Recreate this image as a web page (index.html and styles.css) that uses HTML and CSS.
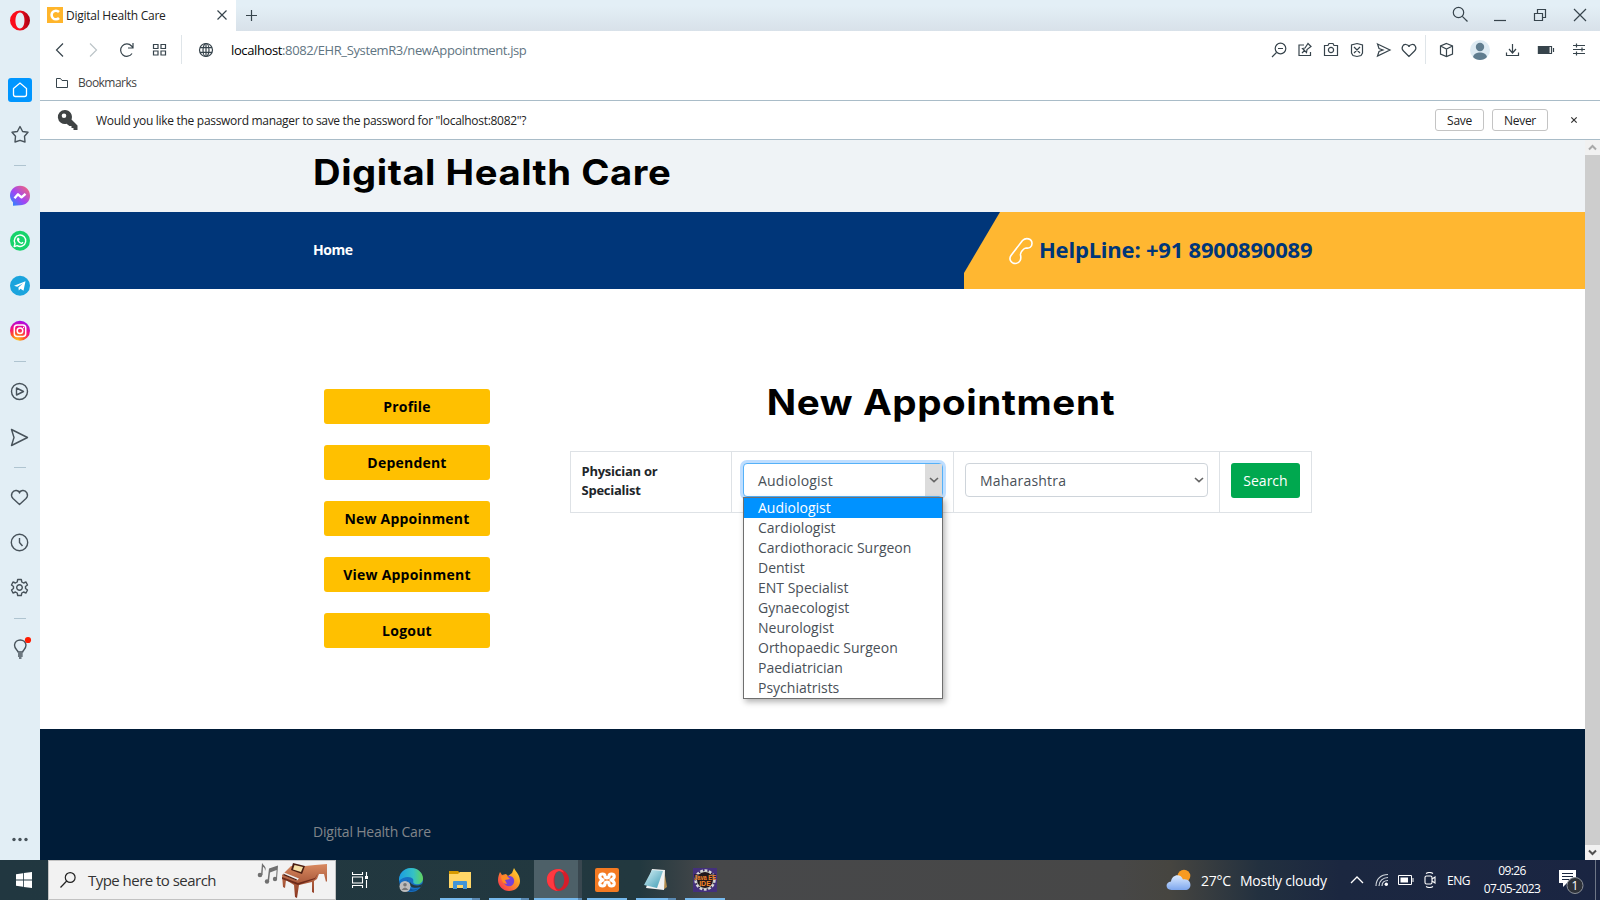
FILE: index.html
```html
<!DOCTYPE html>
<html lang="en">
<head>
<meta charset="utf-8">
<title>Digital Health Care</title>
<link rel="stylesheet" href="styles.css">
</head>
<body>
<div class="screen">
<div class="browser">
  <aside class="sidebar">
    <svg class="opera" viewBox="-13 -12.5 25 25"><defs><linearGradient id="op" x1="0" y1="0" x2="1" y2="0"><stop offset=".45" stop-color="#fb0d1b"/><stop offset="1" stop-color="#a70014"/></linearGradient></defs><path fill="url(#op)" fill-rule="evenodd" d="M0-10A10 10 0 1 1 0 10A10 10 0 1 1 0-10ZM0-8C-6-8-6 8 0 8C6 8 6-8 0-8Z"/></svg>
    <div class="home"><svg viewBox="-12 -12 24 24"><path d="M-6.5-1.5L0-7L6.5-1.5V4.500Q6.500 6.500 4.500 6.500H-4.500Q-6.500 6.500-6.500 4.500Z"/></svg></div>
    <svg class="ico star" viewBox="-13 -12.500 25 25"><path d="M0-8L2.600-3L8-2.200L4.500 1.800L5 7.500L0 5.800L-5 7.500L-4.500 1.800L-8-2.200L-2.600-3Z"/></svg>
    <i class="rule"></i>
    <svg class="ico m18" viewBox="-13 -12.800 25 25"><defs><linearGradient id="ms" x1="0" y1="1" x2="1" y2="0"><stop offset="0" stop-color="#1594ff"/><stop offset=".45" stop-color="#a044f5"/><stop offset="1" stop-color="#ff6b68"/></linearGradient></defs><path class="fill" fill="url(#ms)" d="M0-10C6-10 10-5.500 10 0S6 9.500 0 9.500L-7 10V6.500C-9 4.500-10 2-10 0C-10-5.500-6-10 0-10Z"/><path stroke="#fff" stroke-width="2.400" d="M-5.500 2.500L-2-1.500L1.500 1.500L5.500-2"/></svg>
    <svg class="ico m20" viewBox="-13 -12.800 25 25"><circle class="fill" r="10" fill="#16d46b"/><path stroke="#fff" d="M-5.800 5.800L-5 2.600A5.700 5.700 0 1 1-2.800 4.900Z"/><path class="fill" fill="#fff" d="M-2.500-3L-1-3L-.4-1.200L-1 0Q0 1.600 1.400 2L2.300 1L3.500 1.800Q3 3.500 1.400 3.200Q-2.500 2-3.200-1.200Z"/></svg>
    <svg class="ico m20" viewBox="-13 -12.800 25 25"><circle class="fill" r="10" fill="#1ba4dd"/><path class="fill" fill="#fff" d="M-6 0L5.500-4.500L3.500 5L.5 3L-1.200 4.700L-1.600 1.600L3-2.500L-2.800 1Z"/></svg>
    <svg class="ico m20" viewBox="-13 -12.800 25 25"><defs><radialGradient id="ig" cx=".35" cy="1" r="1"><stop offset="0" stop-color="#ffd21f"/><stop offset=".35" stop-color="#ff5a1e"/><stop offset=".65" stop-color="#f80f7b"/><stop offset="1" stop-color="#a90be8"/></radialGradient></defs><circle class="fill" r="10" fill="url(#ig)"/><g stroke="#fff" stroke-width="1.500"><rect x="-5.700" y="-5.700" width="11.400" height="11.400" rx="3"/><circle r="2.800"/><path d="M3-3.300H4"/></g></svg>
    <i class="rule"></i>
    <svg class="ico m17" viewBox="-12.500 -12.500 25 25"><circle r="8"/><path d="M-3-3.500L4 0L-3 3.500Z"/></svg>
    <svg class="ico m21" viewBox="-12.500 -12.500 25 25"><path d="M-8-8L8 0L-8 8L-5.500 0Z"/></svg>
    <i class="rule r17"></i>
    <svg class="ico m17" viewBox="-12.500 -12.500 25 25"><path d="M0 7L-6.500 1C-10-3-6.500-7.500-3-7C-1.200-6.700 0-5.500 0-4.500C0-5.500 1.200-6.700 3-7C6.500-7.500 10-3 6.500 1Z"/></svg>
    <svg class="ico m20" viewBox="-12.500 -12.500 25 25"><circle r="8.200"/><path d="M0-4.500V0L3 3.500"/></svg>
    <svg class="ico m20" viewBox="-12.500 -12.500 25 25"><circle r="2.800"/><path d="M-1.800-8H1.800L2.300-5.500L4-4.500L6.500-5.500L8-2.500L6-1V1L8 2.500L6.500 5.500L4 4.500L2.300 5.500L1.800 8H-1.800L-2.300 5.500L-4 4.500L-6.500 5.500L-8 2.500L-6 1V-1L-8-2.500L-6.500-5.500L-4-4.500L-2.300-5.500Z"/></svg>
    <i class="rule"></i>
    <svg class="ico m18" viewBox="-12.500 -12.500 25 25"><path d="M-1.500 3.500C-1.500 1.500-5 1-5-3.500A5.800 5.800 0 0 1 6.500-3.500C6.500 1 3.200 1.500 3.200 3.500ZM-1.500 5.500H3.200M-1.500 7.500H3.200M-.500 9.500H2"/><circle class="fill" cx="8.500" cy="-8.500" r="3.100" fill="#ff1b00"/></svg>
    <svg class="ico dots" viewBox="-13 -12.500 25 25"><g class="fill" fill="#47525a"><circle cx="-6" r="1.700"/><circle r="1.700"/><circle cx="6" r="1.700"/></g></svg>
  </aside>

  <div class="window">
    <div class="tabs">
      <div class="tab">
        <svg class="fav" viewBox="0 0 16 16"><rect width="16" height="16" fill="#ffb52b"/><path d="M12 5A4.300 4.300 0 1 0 12 11" fill="none" stroke="#fff" stroke-width="2.600"/></svg>
        <span class="tab-title">Digital Health Care</span>
        <svg class="ti x" viewBox="-12 -12 24 24"><path d="M-4.500-4.500L4.500 4.500M4.500-4.500L-4.500 4.500"/></svg>
      </div>
      <svg class="ti plus" viewBox="-12 -12 24 24"><path d="M-6 .5H5M-.5-5V6"/></svg>
      <svg class="ti wsearch" viewBox="-12 -12 24 24"><circle cx="-1.500" cy="-2.500" r="5.200"/><path d="M2.300 1.300L7.500 6.500"/></svg>
      <svg class="ti wc" viewBox="-12 -12 24 24"><path d="M-6 5.500H6"/></svg>
      <svg class="ti wc" viewBox="-12 -12 24 24"><path d="M-5.500-1.500H2.500V5.500H-5.500ZM-2.500-1.500V-5.500H5.500V2.500H2.500"/></svg>
      <svg class="ti wc" viewBox="-12 -12 24 24"><path d="M-6-6L6 6M6-6L-6 6"/></svg>
    </div>
    <div class="toolbar">
      <svg class="ti" viewBox="-12 -12 24 24"><path d="M3-6.500L-3.500 0L3 6.500"/></svg>
      <svg class="ti g9 faint" viewBox="-12 -12 24 24"><path d="M-3-6.500L3.500 0L-3 6.500"/></svg>
      <svg class="ti g10" viewBox="-12 -12 24 24"><path d="M5 3.500A6.200 6.200 0 1 1 4.500-4L6-2M6-7V-2H1"/></svg>
      <svg class="ti g9" viewBox="-12 -12 24 24"><path d="M-6.500-5.500H-2V-1.500H-6.500ZM1-5.500H5.500V-1.500H1ZM-6.500 1H-2V5H-6.500ZM1 1H5.500V5H1Z"/></svg>
      <i class="vr g9"></i>
      <svg class="ti g12" viewBox="-12 -12 24 24"><circle r="6.500"/><ellipse rx="3" ry="6.500"/><path d="M-6-2.300H6M-6 2.300H6M0-6.500V6.500"/></svg>
      <span class="url"><b>localhost</b>:8082/EHR_SystemR3/newAppointment.jsp</span>
      <svg class="ti push" viewBox="-12 -12 24 24"><circle cx="1.500" cy="-1.500" r="5.300"/><path d="M-1-1.500H4M-2.500 2.500L-7 7"/></svg>
      <svg class="ti g2" viewBox="-12 -12 24 24"><path d="M-1-5H-6V5.500H5.500V2M-3 3L0 0M-2.500-1.500L1.500 2.500L2-.5L6-3.500L3-6.500L0-2Z"/></svg>
      <svg class="ti g2" viewBox="-12 -12 24 24"><path d="M-6.500-4.500H-3L-2-6.500H2L3-4.500H6.500V5.500H-6.500Z"/><circle r="2.600"/></svg>
      <svg class="ti g2" viewBox="-12 -12 24 24"><path d="M0-6.500L5.500-5V3L4 5.500L0 6.500L-4 5.500L-5.500 3V-5ZM-3-3L3 3M3-3L-3 3"/></svg>
      <svg class="ti g2" viewBox="-12 -12 24 24"><path d="M-5.500-6L7 0L-5.500 6L-4 1.500L0 0L-4-1.500Z"/></svg>
      <svg class="ti g2" viewBox="-12 -12 24 24"><path d="M0 6.500L-5.500 1C-8.500-2-6-6-3-5.500C-1.200-5.200 0-4.200 0-3C0-4.200 1.200-5.200 3-5.500C6-6 8.500-2 5.500 1Z"/></svg>
      <i class="vr g4"></i>
      <svg class="ti g8" viewBox="-12 -12 24 24"><path d="M.5-6.500L6.500-4V4L.5 6.500L-5.500 4V-4ZM-5.500-4L.5-1L6.500-4M.5-1V6.500"/></svg>
      <svg class="ti g10" viewBox="-12 -12 24 24"><g stroke="none"><circle r="10" fill="#deebf3"/><circle cy="-3" r="4.200" fill="#607d8f"/><path fill="#607d8f" d="M-7 7C-6 3.500-3 2.500 0 2.500S6 3.500 7 7C4 11-4 11-7 7Z"/></g></svg>
      <svg class="ti g9" viewBox="-12 -12 24 24"><path d="M-.5-6V3M-4-1L-.5 3L3-1M-6.500 2.500V5.500H5.500V2.500"/></svg>
      <svg class="ti g9" viewBox="-12 -12 24 24"><path d="M-7.500-3.500H5.500V3.500H-7.500ZM7.500-2V2"/><path class="solid" d="M-7.500-3.500H3V3.500H-7.500Z"/></svg>
      <svg class="ti g9" viewBox="-12 -12 24 24"><path d="M-6-4.500H6M-6-.500H6M-6 3.500H6M-2.500-6.500V-2.500M3-2.500V1.500M-2.500 1.500V5.500"/></svg>
    </div>
    <div class="bookmarks">
      <svg class="folder" viewBox="0 0 14 12"><path d="M1.500 1.500H5.500L7 3.500H12.500V10.500H1.500Z"/></svg>
      <span class="bm">Bookmarks</span>
    </div>
    <div class="pwbar">
      <svg class="key" viewBox="0 0 22 22"><path fill="#3f4344" fill-rule="evenodd" d="M8 1A7 7 0 0 1 14.500 10.500L20.500 16.500V21H16.500V19H14.500V17H12.500L9.500 14.800A7 7 0 1 1 8 1ZM7 4.500A2.300 2.300 0 1 0 7 9.100A2.300 2.300 0 1 0 7 4.500Z"/></svg>
      <span class="pwtext">Would you like the password manager to save the password for "localhost:8082"?</span>
      <button class="pwbtn save">Save</button>
      <button class="pwbtn never">Never</button>
      <svg class="pwx" viewBox="-4 -4 8 8"><path d="M-2.700-2.700L2.700 2.700M2.700-2.700L-2.700 2.700"/></svg>
    </div>

    <div class="view">
      <div class="page">
        <header class="brand"><h1>Digital Health Care</h1></header>
        <nav class="nav">
          <a class="navhome">Home</a>
          <div class="help">
            <svg class="phone" viewBox="0 0 26 28"><path d="M14.500 3.500C18 .200 24 1.500 24 6.500C24 10.500 21 11.500 18 11C16 11 12 15.500 12.500 18C13.500 22 12 26.500 7.500 26.500C3 26.500 .500 22 3 18.500Z"/></svg>
            <span class="helpline">HelpLine: +91 8900890089</span>
          </div>
        </nav>
        <main class="main">
          <div class="menu">
            <a>Profile</a><a>Dependent</a><a>New Appoinment</a><a>View Appoinment</a><a>Logout</a>
          </div>
          <section class="content">
            <h2>New Appointment</h2>
            <div class="row">
              <div class="cell label">Physician or<br>Specialist</div>
              <div class="cell">
                <div class="select open"><span>Audiologist</span><i class="arrow"><svg viewBox="0 0 10 6"><path d="M1 1L5 4.700L9 1"/></svg></i>
                  <ul class="list">
                    <li class="on">Audiologist</li><li>Cardiologist</li><li>Cardiothoracic Surgeon</li><li>Dentist</li><li>ENT Specialist</li><li>Gynaecologist</li><li>Neurologist</li><li>Orthopaedic Surgeon</li><li>Paediatrician</li><li>Psychiatrists</li>
                  </ul>
                </div>
              </div>
              <div class="cell state"><div class="select"><span>Maharashtra</span><i class="arrow"><svg viewBox="0 0 10 6"><path d="M1 1L5 4.700L9 1"/></svg></i></div></div>
              <div class="cell"><button class="search">Search</button></div>
            </div>
          </section>
        </main>
        <footer class="foot">Digital Health Care</footer>
      </div>
      <div class="scroll">
        <svg viewBox="0 0 15 15"><path stroke="#a9a9a9" d="M4 9.500L7.500 6L11 9.500"/></svg>
        <div class="thumb"></div>
        <svg viewBox="0 0 15 15"><path stroke="#505050" d="M4 5.500L7.500 9L11 5.500"/></svg>
      </div>
    </div>
  </div>
</div>

<div class="taskbar">
  <svg class="t16 win" viewBox="0 0 16 16"><path fill="#fff" d="M0 2.300L7 1.200V7.600H0ZM7.800 1L16 0V7.600H7.800ZM0 8.400H7V14.800L0 13.700ZM7.800 8.400H16V16L7.800 14.900Z"/></svg>
  <div class="tsearch">
    <svg class="t16" viewBox="0 0 16 16"><g fill="none" stroke="#222" stroke-width="1.200"><circle cx="10.200" cy="5.500" r="4.900"/><path d="M6.700 9L.5 15.500"/></g></svg>
    <span class="tstext">Type here to search</span>
    <svg class="piano" viewBox="0 0 72 38"><defs><linearGradient id="pn" x1="0" y1="0" x2="0" y2="1"><stop offset="0" stop-color="#d98a60"/><stop offset="1" stop-color="#87351f"/></linearGradient></defs>
      <g fill="#707070"><circle cx="3" cy="14" r="2.300"/><path d="M4 14L5 2C7 5 10 6 8 10C8 7 7 6 6 6L5.500 14Z"/><circle cx="10" cy="20.500" r="2.200"/><circle cx="18" cy="18" r="2.200"/><path d="M10.500 20L12 7.500L21 4.500L20 18H19L19.600 9L13 11.500L12 20.500Z"/></g>
      <path fill="url(#pn)" d="M25 14L34 5L48 5L58 4L70 3V20L69 21L67 13L62 13L60 18L57 20V32L55 31V21L42 24L40 37L38 36L37 24L29 19L28 27L26 26Z"/><path fill="#6e2b1b" d="M25 16L41 22L58 17L61 12L58 18L41 24L25 18Z"/><path fill="#eee" d="M27 11.500L42 17.500L40 19.500L26 13.500Z"/><path fill="#4a1d12" d="M27 13L40 18.500L39.500 19.500L26 14Z"/><path fill="#4a1d12" d="M36 2L48 5L45 13L34 9Z"/><path fill="#f5dfa5" d="M37.500 4L46 6L44 11L36 8.500Z"/></svg>
  </div>
  <svg class="t16 tview" viewBox="0 0 16 16"><g fill="none" stroke="#fff" stroke-width="1.100"><path d="M.5 0V2.500H10.500V0M.5 16V13.500H10.500V16M.5 5H10.500V11H.5ZM14.500 0V4M14.500 8V16"/></g><path fill="#fff" d="M13 4H16V7H13Z"/></svg>
  <div class="app a0"><svg viewBox="0 0 24 24"><defs><linearGradient id="ed"><stop offset="0" stop-color="#1b9de2"/><stop offset=".6" stop-color="#35c1c5"/><stop offset="1" stop-color="#62d45b"/></linearGradient></defs><circle cx="12" cy="12" r="12" fill="#1770c4"/><path fill="url(#ed)" d="M0 11C1 4 6 0 12 0C19 0 24 5 24 10.500C24 15 20 17 16 16C13 15 15 13 14 11C12 8 4 8 0 13Z"/><path fill="#223941" d="M24 15C20 19 13 18 11 14C9 19 15 21 22 19Z"/><path fill="#0e56a0" d="M9 12C7 19 13 24 20 20C15 25 5 24 5 16Z"/><circle cx="6" cy="18.500" r="5.500" fill="#bdbdbd"/><circle cx="6" cy="16.800" r="1.800" fill="#777"/><path fill="#777" d="M2.500 22Q6 17 9.500 22Z"/></svg></div>
  <div class="app a1"><svg viewBox="0 0 24 24"><path fill="#d69a00" d="M1 3H10L12 5V8H1Z"/><path fill="#ffd667" d="M1 6H10L12 4H23V20H1Z"/><path fill="#4195d8" d="M5 21V14Q5 13 6 13H18Q19 13 19 14V21H15V17H9V21Z"/></svg><i class="bar split"></i></div>
  <div class="app a2"><svg viewBox="0 0 24 24"><defs><linearGradient id="ff" x1="1" y1="0" x2="0" y2="1"><stop offset="0" stop-color="#ffe53b"/><stop offset=".4" stop-color="#ff9a24"/><stop offset="1" stop-color="#f5245a"/></linearGradient></defs><path fill="url(#ff)" d="M3 4L5 7L9 6L11 8L15 5L17 0C19 4 23 7 23 13C23 19 18 23 12 23S1 18 1 12C1 9 2 6 3 4Z"/><circle cx="12" cy="13" r="5.200" fill="#7541d8"/><path fill="#ff8a26" d="M4 8L10 8L13 11L8 12L10 16C6 16 4 12 4 8Z"/></svg><i class="bar split"></i></div>
  <div class="app a3 active"><svg viewBox="-12 -12 24 24"><path fill="#d61d29" fill-rule="evenodd" d="M0-11A11 11 0 1 1 0 11A11 11 0 1 1 0-11ZM1-9C-5-9-5 9 1 9C8 7 8-7 1-9Z"/><path fill="#ff3940" d="M1-11C-15-11-15 9 0 11C-6 8-6-8 1-9C3-9 5-8 6-7C5-10 3-11 1-11Z"/></svg><i class="bar split"></i></div>
  <div class="app a4"><svg viewBox="0 0 24 24"><rect width="24" height="24" rx="2" fill="#f47a22"/><path fill="none" stroke="#fff" stroke-width="3.200" stroke-linejoin="round" stroke-linecap="round" d="M8 12Q4.500 10.500 4.800 8Q5.200 6 7.500 6Q10 6 10 8.500Q10.200 9.800 12 9.800T14 8.500Q14 6 16.500 6Q18.800 6 19.200 8Q19.500 10.500 16 12Q19.500 13.500 19.200 16Q18.800 18 16.500 18Q14 18 14 15.500Q13.800 14.200 12 14.200T10 15.500Q10 18 7.500 18Q5.200 18 4.800 16Q4.500 13.500 8 12Z"/></svg><i class="bar"></i></div>
  <div class="app a5"><svg viewBox="0 0 24 24"><defs><linearGradient id="np" x1="0" y1="0" x2="1" y2="1"><stop offset="0" stop-color="#d7f1f6"/><stop offset="1" stop-color="#3d9bb4"/></linearGradient></defs><path fill="#b28b4c" d="M20 2L23 19L19 22Z"/><path fill="#f2f2f2" d="M8 1L21 2L20 22L2 20Z"/><path fill="url(#np)" d="M8 2L19 3L13 20L0 17Z"/></svg><i class="bar split"></i></div>
  <div class="app a6"><svg class="java" viewBox="0 0 24 24"><rect width="24" height="24" fill="#44307c"/><circle cx="12" cy="12" r="9.500" fill="#22171d" stroke="#d8d8d8" stroke-width="2.400" stroke-dasharray="2.800 1.600"/><circle cx="12" cy="12" r="8.500" fill="none" stroke="#ccc"/><path fill="#22171d" d="M1 6H23V12H1Z" opacity=".6"/><g fill="#f5852b" font-family="Liberation Sans" font-weight="700" text-anchor="middle"><text x="12" y="11.500" font-size="6.500" textLength="22" lengthAdjust="spacingAndGlyphs">Java EE</text><text x="12" y="17.500" font-size="7">IDE</text></g></svg><i class="bar"></i></div>
  <div class="tray">
    <svg class="cloud" viewBox="0 0 26 22"><defs><linearGradient id="cl" x1="0" y1="0" x2="0" y2="1"><stop offset="0" stop-color="#dcebff"/><stop offset="1" stop-color="#7ea7ee"/></linearGradient></defs><circle cx="18" cy="7" r="6.300" fill="#f79a22"/><path fill="url(#cl)" d="M5.500 21C-1 21-1 13 5 12.500C6 5 15 4 17 10.500C26 9 27 21 19 21Z"/></svg>
    <span class="temp">27°C</span><span class="sky">Mostly cloudy</span>
    <svg class="chev" viewBox="0 0 14 8"><path d="M1 7L7 1L13 7"/></svg>
    <svg class="wifi" viewBox="0 0 14 14"><g fill="none" stroke="#cfd5dc" stroke-width="1.200"><path d="M1 13C1 6 6 1.500 13 1.500M4 13C4 8 8 4.500 13 4.500M7 13C7 10 9 7.500 13 7.500"/></g><circle cx="11.300" cy="11.300" r="1.700" fill="#fff"/></svg>
    <svg class="batt" viewBox="0 0 16 10"><path d="M.5 .5H13.500V9.500H.5ZM15 3V7" fill="none" stroke="#fff"/><path fill="#fff" d="M2.500 2.500H10V7.500H2.500Z"/></svg>
    <svg class="meet" viewBox="0 0 12 16"><g fill="none" stroke="#fff" stroke-width="1.100"><rect x="1" y="4" width="7" height="8" rx="1.500"/><path d="M8 7L11 5V11L8 9M2 1.500Q5.500-.500 9 1.500M2 14.500Q5.500 16.500 9 14.500"/></g></svg>
    <span class="eng">ENG</span>
    <div class="clock"><span>09:26</span><span class="date">07-05-2023</span></div>
    <svg class="note" viewBox="0 0 25 25"><path fill="#fff" d="M0 1H17V14H8L4 18V14H0Z"/><path stroke="#1b2740" stroke-width="1.200" d="M3 4.500H14M3 7.500H14M3 10.500H10"/><circle cx="16" cy="16.500" r="8" fill="#2d3138" stroke="#8c9199"/><text x="16" y="21" fill="#fff" font-family="Open Sans" font-size="12" text-anchor="middle">1</text></svg>
    <i class="peek"></i>
  </div>
</div>
</div>
</body>
</html>
```

FILE: styles.css
```css
* { box-sizing: border-box; }
body { margin: 0; font-family: "Open Sans", "Noto Sans", sans-serif; overflow: hidden; }
svg { display: block; flex: none; }
i { display: block; flex: none; }
.screen { width: 1600px; height: 900px; display: flex; flex-direction: column; }
.browser { height: 860px; display: flex; }

/* left rail */
.sidebar { width: 40px; height: 860px; background: #e2eef5; padding: 8px 0 0 7px; flex: none; }
.opera { width: 25px; height: 25px; }
.home { width: 24px; height: 24px; margin: 45px 0 0 1px; border-radius: 3px; background: #0096ff; }
.home path { fill: none; stroke: #fff; stroke-width: 1.300; }
.ico { width: 25px; height: 25px; fill: none; stroke: #47525a; stroke-width: 1.400; stroke-linejoin: round; }
.ico .fill { stroke: none; }
.star { margin-top: 20px; }
.rule { width: 12px; height: 1px; margin: 18px 0 0 7px; background: #afc4d0; }
.r17, .m17 { margin-top: 17px; }
.m18 { margin-top: 17px; }
.m20 { margin-top: 20px; }
.m21 { margin-top: 21px; }
.dots { margin-top: 166px; }

/* browser chrome */
.window { width: 1560px; display: flex; flex-direction: column; }
.tabs { height: 31px; display: flex; align-items: flex-start; padding-right: 8px; background: linear-gradient(#e3eff6 20%, #d8e1e9); }
.tab { width: 196px; height: 31px; background: #fff; display: flex; padding: 7px 0 0 7px; }
.fav { width: 16px; height: 16px; }
.tab-title { width: 104px; margin-left: 3px; font-size: 12px; line-height: 18px; letter-spacing: -.250px; color: #222; white-space: nowrap; }
.ti { width: 24px; height: 24px; fill: none; stroke: #37444c; stroke-width: 1.200; }
.ti .solid { fill: #37444c; }
.x { margin: -4px 0 0 40px; }
.plus { margin: 3px 0 0 4px; }
.wsearch { margin: 3px 0 0 auto; }
.wc { margin: 3px 0 0 16px; }
.toolbar { height: 39px; display: flex; align-items: center; padding: 0 9px 2px 8px; background: #fff; }
.faint { stroke: #bcc4c8; }
.g2 { margin-left: 2px; } .g4 { margin-left: 4px; } .g8 { margin-left: 8px; } .g9 { margin-left: 9px; } .g10 { margin-left: 10px; } .g12 { margin-left: 12px; }
.vr { width: 1px; height: 29px; background: #dfe5e9; }
.url { margin-left: 13px; font-size: 13px; letter-spacing: -.380px; color: #5f7582; white-space: nowrap; }
.url b { font-weight: 400; color: #000; }
.push { margin-left: auto; }
.bookmarks { height: 31px; padding: 0 0 5px 15px; display: flex; align-items: center; border-bottom: 1px solid #a9bcc8; background: #fff; }
.folder { width: 14px; height: 12px; fill: none; stroke: #37444c; }
.bm { margin-left: 9px; font-size: 12px; letter-spacing: -.540px; color: #444; }
.pwbar { height: 39px; display: flex; align-items: center; border-bottom: 1px solid #a9bcc8; background: #fff; padding: 0 22px 0 17px; }
.key { width: 22px; height: 22px; }
.pwtext { margin-left: 17px; font-size: 12px; letter-spacing: -.300px; color: #222; white-space: nowrap; }
.pwbtn { height: 22px; padding: 0; border: 1px solid #c4c4c4; border-radius: 3px; background: #fff; color: #222; font: 12px "Open Sans", sans-serif; letter-spacing: -.300px; }
.save { width: 49px; margin-left: auto; }
.never { width: 56px; margin-left: 8px; }
.pwx { width: 8px; height: 8px; margin-left: 22px; stroke: #333; stroke-width: 1.200; }

/* web page */
.view { height: 720px; display: flex; }
.page { width: 1545px; background: #fff; }
.scroll { width: 15px; display: flex; flex-direction: column; background: #f1f1f1; }
.scroll svg { width: 15px; height: 15px; fill: none; stroke-width: 2; }
.thumb { flex: 1; background: #cdcdcd; }
.brand { height: 72px; padding: 10px 0 0 273px; background: #eff3f6; }
h1, h2 { margin: 0; font-family: Inter, "Open Sans", sans-serif; font-size: 35px; line-height: 44px; font-weight: 700; color: #000; white-space: nowrap; letter-spacing: .500px; transform: scaleX(1.092); transform-origin: left; }
.nav { height: 77px; display: flex; background: #003679; }
.navhome { width: 651px; margin-left: 273px; padding-top: 28px; font-size: 14px; line-height: 20px; font-weight: 700; color: #fff; letter-spacing: -.500px; }
.help { flex: 1; display: flex; background: #ffb731; clip-path: polygon(36px 0, 100% 0, 100% 100%, 0 100%, 0 61px); padding: 0 0 0 44px; }
.phone { width: 26px; height: 28px; margin-top: 25px; fill: none; stroke: #fff; stroke-width: 1.600; }
.helpline { margin: 22px 0 0 5px; font-size: 22px; line-height: 30px; font-weight: 700; color: #003679; white-space: nowrap; letter-spacing: -.210px; }
.main { height: 440px; display: flex; }
.menu { width: 166px; margin: 100px 0 0 284px; display: flex; flex-direction: column; gap: 21px; }
.menu a { height: 35px; border-radius: 3px; background: #ffc000; color: #000; font-size: 14px; line-height: 35px; font-weight: 700; text-align: center; letter-spacing: .220px; }
.content { width: 742px; margin: 91px 0 0 80px; }
h2 { text-align: center; transform: scaleX(1.103); transform-origin: center; }
.row { display: grid; grid-template-columns: 161px 222px 266px 92px; height: 62px; margin-top: 27px; border: 1px solid #dee2e6; border-width: 1px 0 1px 1px; }
.cell { border-right: 1px solid #dee2e6; padding: 11px 10px 0 11px; }
.cell.label { padding: 10px 10px 0 10.500px; font-size: 13px; line-height: 19px; font-weight: 700; color: #212529; letter-spacing: -.250px; }
.cell.state { padding-right: 11px; }
.select { position: relative; height: 34px; display: flex; justify-content: space-between; border: 1px solid #ced4da; border-radius: 4px; padding-left: 14px; font-size: 14px; line-height: 33px; color: #495057; background: #fff; letter-spacing: .200px; }
.arrow { width: 17px; display: flex; align-items: center; justify-content: center; }
.arrow svg { width: 10px; height: 6px; fill: none; stroke: #666; stroke-width: 1.600; }
.open { border-color: #55b1f8; box-shadow: 0 0 0 3px #bfdeff; }
.open .arrow { background: #dcdcdc; }
.list { position: absolute; left: -1px; top: 33px; width: 200px; margin: 0; padding: 0; list-style: none; border: 1px solid #6f6f6f; background: #fff; box-shadow: 2px 3px 6px rgba(0,0,0,.3); z-index: 2; letter-spacing: 0; }
.list li { height: 20px; line-height: 19px; padding-left: 14px; white-space: nowrap; }
.list .on { background: #0092ff; color: #fff; }
.search { width: 69px; height: 35px; padding: 0; border: 0; border-radius: 3px; background: #00a84f; color: #fff; font: 14px "Open Sans", sans-serif; }
.foot { height: 131px; padding: 93px 0 0 273px; font-size: 14px; line-height: 20px; color: #80858a; background: #001c38; letter-spacing: -.200px; }

/* taskbar */
.taskbar { height: 40px; display: flex; background: linear-gradient(90deg, #213740 0, #22383f 640px, #47484a 710px, #474747 1120px, #464540 1170px, #22303f 1260px, #1b2740 1340px, #1a2542); }
.t16 { width: 16px; height: 16px; }
.win { margin: 12px 16px; }
.tsearch { width: 288px; height: 40px; display: flex; align-items: center; padding-left: 11px; background: #f2f2f2; border: 1px solid #c2c2c2; }
.tstext { margin-left: 12px; width: 169px; font-size: 15px; letter-spacing: -.530px; color: #333; white-space: nowrap; }
.piano { width: 72px; height: 38px; }
.tview { margin: 12px 0 0 16px; }
.app { width: 40px; height: 40px; display: flex; flex-direction: column; align-items: center; justify-content: space-between; padding-top: 8px; }
.app svg { width: 24px; height: 24px; }
.app .java { overflow: visible; }
.bar { width: 100%; height: 2px; background: #76b9ed; }
.split { background: linear-gradient(90deg, #76b9ed 80%, #5a8ab4 80%); }
.a0 { margin-left: 23px; }
.a1 { margin-left: 9px; }
.a2 { margin-left: 9px; }
.a3 { width: 48px; margin-left: 5px; }
.active { background: linear-gradient(90deg, #4d6068 44px, #39474f 44px); }
.active .split { background: linear-gradient(90deg, #76b9ed 44px, #5a8ab4 44px); }
.a4 { margin-left: 5px; }
.a5 { margin-left: 9px; }
.a6 { margin-left: 9px; }
.tray { margin-left: auto; display: flex; align-items: center; color: #fff; white-space: nowrap; }
.cloud { width: 26px; height: 22px; margin-right: 1px; }
.temp, .sky { font-size: 14px; letter-spacing: -.230px; }
.temp { width: 39px; margin-left: 8px; }
.sky { width: 110px; }
.chev { width: 14px; height: 8px; fill: none; stroke: #fff; stroke-width: 1.300; }
.wifi { width: 14px; height: 14px; margin-left: 11px; }
.batt { width: 16px; height: 10px; margin-left: 9px; }
.meet { width: 12px; height: 16px; margin-left: 10px; }
.eng { width: 24px; margin-left: 11px; font-size: 12px; letter-spacing: -.500px; }
.clock { width: 62px; margin-left: 10px; display: flex; flex-direction: column; align-items: center; font-size: 12px; line-height: 18px; letter-spacing: -.600px; }
.note { width: 25px; height: 25px; margin: 3px 0 0 16px; }
.peek { width: 1px; height: 40px; margin: 0 4px 0 11px; background: #6d7686; }
```
